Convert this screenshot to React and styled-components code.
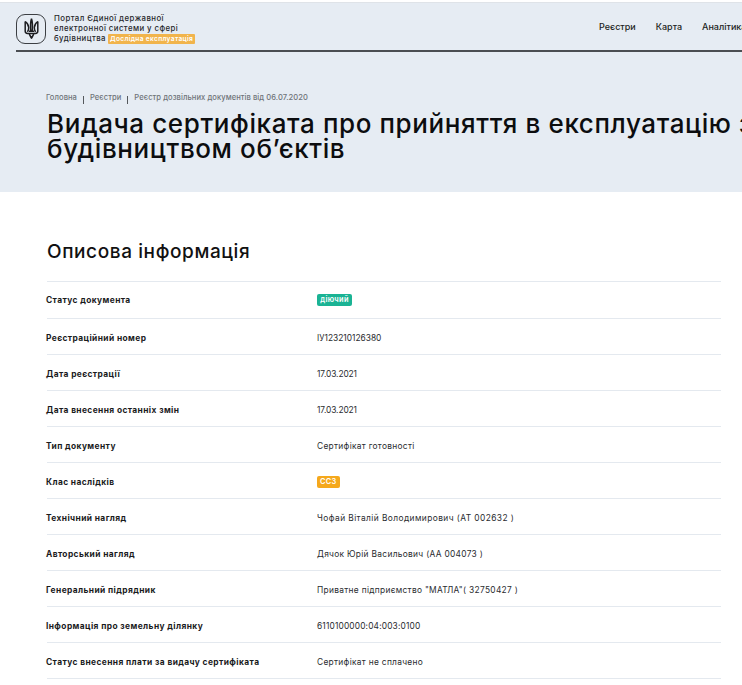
import React from "react";
import styled, { createGlobalStyle } from "styled-components";

const Global = createGlobalStyle`
  html, body { margin: 0; padding: 0; background: #fff; overflow: hidden; }
  body { font-family: Inter, "Noto Sans", sans-serif; color: #111; }
`;

const Page = styled.div`width: 742px; height: 685px; overflow: hidden;`;

const Header = styled.header`
  height: 50px;
  margin-top: 2px;
  border-top: 1px solid #dfe3e8;
  background: #e6ecf3;
  padding-left: 16px;
  display: flex;
  flex-direction: column;
  box-sizing: border-box;
`;
const HeaderInner = styled.div`
  flex: 1;
  display: flex;
  align-items: center;
  border-bottom: 2px solid #4b4e52;
  white-space: nowrap;
`;
const LogoBox = styled.div`
  width: 30px; height: 30px;
  margin-top: 4px;
  border: 1px solid #3c3f43;
  border-radius: 9px;
  display: flex; align-items: center; justify-content: center;
  flex: none;
  box-sizing: border-box;
`;
const Brand = styled.div`
  margin: 3px 0 0 8px;
  font-size: 7.8px;
  line-height: 10px;
  font-weight: 500;
  letter-spacing: 0.44px;
  color: #26282b;
  width: 170px;
  flex: none;
`;
const Badge = styled.span`
  background: #f1b44c;
  color: #fff;
  font-size: 6.6px;
  line-height: 10px;
  font-weight: 600;
  letter-spacing: 0.33px;
  padding: 1px 2px;
  border-radius: 1px;
  margin-left: 2px;
`;
const Nav = styled.nav`
  margin-left: 375px;
  display: flex;
  gap: 20px;
  font-size: 9px;
  font-weight: 500;
  color: #1d1f22;
`;

const Hero = styled.section`
  background: #e6ecf3;
  height: 140px;
  padding: 39px 0 0 47px;
  box-sizing: border-box;
`;
const Crumbs = styled.div`
  display: flex;
  align-items: center;
  font-size: 7.6px;
  font-weight: 500;
  letter-spacing: 0.05px;
  color: #6f7479;
  height: 12px;
  margin-left: -1px;
`;
const Sep = styled.span`
  width: 1px; height: 8px;
  background: #55585c;
  margin: 6px 6px 0 6px;
`;
const Title = styled.h1`
  margin: 8px 0 0;
  white-space: nowrap;
  font-size: 26px;
  line-height: 25px;
  font-weight: 500;
  letter-spacing: 0.6px;
  color: #0c0d0f;
`;

const Main = styled.main`
  padding: 46px 21px 0 47px;
`;
const SectionTitle = styled.h2`
  margin: 0 0 15px;
  font-size: 19px;
  line-height: 28px;
  font-weight: 500;
  letter-spacing: 0.6px;
  color: #111;
`;
const Row = styled.div`
  display: grid;
  grid-template-columns: 270px 1fr;
  align-items: center;
  height: 36px;
  padding-top: 2px;
  border-top: 1px solid #e4e9ef;
  box-sizing: border-box;
  &:first-of-type { height: 37px; padding-top: 0; }
  &:last-child { border-bottom: 1px solid #e4e9ef; height: 37px; }
`;
const Label = styled.div`
  font-size: 8.4px;
  font-weight: 700;
  letter-spacing: 0.4px;
  color: #1a1b1d;
  margin-left: -1px;
`;
const Value = styled.div`
  font-size: 8.4px;
  letter-spacing: ${(p) => p.$spacing ?? 0.3}px;
  color: #2a2c2f;
  white-space: nowrap;
`;
const Tag = styled.span`
  display: inline-block;
  background: ${(p) => p.$color};
  color: #fff;
  font-size: 7.4px;
  font-weight: 600;
  letter-spacing: 0.3px;
  line-height: 12px;
  padding: 0 3px;
  border-radius: 2px;
  min-width: ${(p) => p.$min}px;
  text-align: center;
  box-sizing: border-box;
`;

const rows = [
  ["Статус документа", <Tag $color="#1ab394" $min={35}>діючий</Tag>],
  ["Реєстраційний номер", "ІУ123210126380", 0],
  ["Дата реєстрації", "17.03.2021", -0.1],
  ["Дата внесення останніх змін", "17.03.2021", -0.1],
  ["Тип документу", "Сертифікат готовності"],
  ["Клас наслідків", <Tag $color="#f5a81c" $min={22}>СС3</Tag>],
  ["Технічний нагляд", "Чофай Віталій Володимирович (АТ 002632 )", 0.42],
  ["Авторський нагляд", "Дячок Юрій Васильович (АА 004073 )"],
  ["Генеральний підрядник", "Приватне підприємство \"МАТЛА\"( 32750427 )"],
  ["Інформація про земельну ділянку", "6110100000:04:003:0100", 0.15],
  ["Статус внесення плати за видачу сертифіката", "Сертифікат не сплачено"],
];

function Trident() {
  return (
    <svg width="15" height="21" viewBox="0 0 15 21" fill="none" stroke="#1c1d20" strokeWidth="1.5" strokeLinejoin="round">
      <path d="M7.5 .8C6.4 4 6.3 8 6.8 13.5M7.5 .8C8.6 4 8.7 8 8.2 13.5" />
      <path d="M1.2 3.5V13c0 1.6.8 2.4 2.3 2.4h8c1.5 0 2.3-.8 2.3-2.4V3.5" />
      <path d="M1.2 3.5C3.3 5 4.5 7.2 4.7 9.5c.1 1.6-.4 3-1.2 4.4M13.8 3.5C11.7 5 10.5 7.2 10.3 9.5c-.1 1.6.4 3 1.2 4.4" />
      <path d="M5.3 15.4c.1 1.6 1.2 2.8 2.2 4.8 1-2 2.1-3.2 2.2-4.8M5 13.2h5" />
    </svg>
  );
}

export default function App() {
  return (
    <Page>
      <Global />
      <Header>
        <HeaderInner>
          <LogoBox><Trident /></LogoBox>
          <Brand>
            Портал Єдиної державної<br />
            електронної системи у сфері<br />
            будівництва<Badge>Дослідна експлуатація</Badge>
          </Brand>
          <Nav>
            <span>Реєстри</span>
            <span>Карта</span>
            <span>Аналітика</span>
          </Nav>
        </HeaderInner>
      </Header>
      <Hero>
        <Crumbs>
          <span>Головна</span><Sep />
          <span>Реєстри</span><Sep />
          <span>Реєстр дозвільних документів від 06.07.2020</span>
        </Crumbs>
        <Title>
          Видача сертифіката про прийняття в експлуатацію з<br />
          будівництвом об’єктів
        </Title>
      </Hero>
      <Main>
        <SectionTitle>Описова інформація</SectionTitle>
        {rows.map(([label, value, spacing]) => (
          <Row key={label}>
            <Label>{label}</Label>
            <Value $spacing={spacing}>{value}</Value>
          </Row>
        ))}
      </Main>
    </Page>
  );
}
